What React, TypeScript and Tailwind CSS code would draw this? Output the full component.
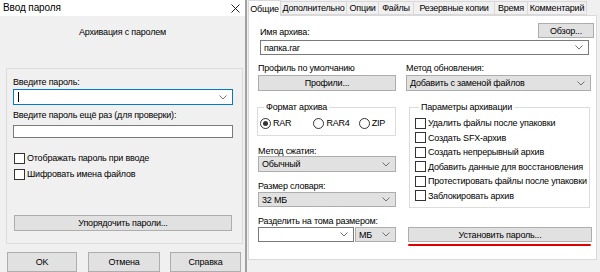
import React from 'react'

function Chevron() {
  return (
    <svg width="8" height="5" viewBox="0 0 8 5" className="flex-shrink-0">
      <polyline points="0.5,0.5 4,4 7.5,0.5" fill="none" stroke="#707070" strokeWidth="1" />
    </svg>
  )
}

function Btn({ children, className = '' }: { children?: React.ReactNode; className?: string }) {
  return (
    <div className={`flex items-center justify-center bg-[#e1e1e1] border border-[#adadad] ${className}`}>
      {children}
    </div>
  )
}

// выпадающий список только для чтения (серый)
function Select({ value, className = '' }: { value: string; className?: string }) {
  return (
    <div className={`flex items-center justify-between bg-[#e1e1e1] border border-[#adadad] pl-[3px] pr-[5px] ${className}`}>
      <span>{value}</span>
      <Chevron />
    </div>
  )
}

// редактируемый комбобокс (белый)
function Combo({ value = '', className = '', focused = false }: { value?: string; className?: string; focused?: boolean }) {
  return (
    <div
      className={`flex items-center justify-between bg-white border pl-[3px] pr-[5px] ${
        focused ? 'border-[#0078d7]' : 'border-[#7a7a7a]'
      } ${className}`}
    >
      <span className="flex items-center">
        {focused && <span className="block w-px h-[10px] bg-black ml-px" />}
        {value}
      </span>
      <Chevron />
    </div>
  )
}

function Check({ label }: { label: string }) {
  return (
    <div className="flex items-center h-[12px] gap-[2px]">
      <span className="block w-[11px] h-[11px] bg-white border border-[#333333] flex-shrink-0" />
      <span>{label}</span>
    </div>
  )
}

function Radio({ label, checked = false, className = '' }: { label: string; checked?: boolean; className?: string }) {
  return (
    <div className={`flex items-center gap-[2px] ${className}`}>
      <span className="flex items-center justify-center w-[11px] h-[11px] rounded-full border border-[#333333] bg-white">
        {checked && <span className="block w-[5px] h-[5px] rounded-full bg-[#333333]" />}
      </span>
      <span>{label}</span>
    </div>
  )
}

const tabs = [
  { label: 'Общие', w: 'w-[33px]', active: true },
  { label: 'Дополнительно', w: 'w-[66px]' },
  { label: 'Опции', w: 'w-[32px]' },
  { label: 'Файлы', w: 'w-[35px]' },
  { label: 'Резервные копии', w: 'w-[81px]' },
  { label: 'Время', w: 'w-[33px]' },
  { label: 'Комментарий', w: 'w-[59px]' },
]

const options = [
  'Удалить файлы после упаковки',
  'Создать SFX-архив',
  'Создать непрерывный архив',
  'Добавить данные для восстановления',
  'Протестировать файлы после упаковки',
  'Заблокировать архив',
]

export default function App() {
  return (
    <div className="flex w-[600px] h-[272px] overflow-hidden whitespace-nowrap font-['Liberation_Sans',Arial,sans-serif] text-[9px] tracking-[-0.2px] leading-[12px] text-black select-none">

      {/* ── ДИАЛОГ «ВВОД ПАРОЛЯ» ── */}
      <div className="w-[247px] flex-shrink-0 bg-[#f0f0f0] border-r-2 border-[#a0a0a0] flex flex-col">
        <div className="h-[16px] bg-white flex items-center justify-between pl-[3px] pr-[5px]">
          <span className="text-[10px] tracking-[-0.1px]">Ввод пароля</span>
          <svg width="9" height="9" viewBox="0 0 9 9">
            <path d="M0.5 0.5 L8.5 8.5 M8.5 0.5 L0.5 8.5" stroke="#222" strokeWidth="1" />
          </svg>
        </div>

        <div className="mt-[10px] text-center">Архивация с паролем</div>

        <div className="ml-[6px] mt-[30px] w-[237px] h-[176px] border border-[#dcdcdc] pl-[6px] pt-[7px] flex flex-col">
          <div>Введите пароль:</div>
          <Combo focused className="mt-px w-[220px] h-[16px]" />
          <div className="mt-[4px]">Введите пароль ещё раз (для проверки):</div>
          <div className="mt-[4px] w-[220px] h-[13px] bg-white border border-[#7a7a7a]" />
          <div className="mt-[14px] ml-px">
            <Check label="Отображать пароль при вводе" />
          </div>
          <div className="mt-[4px] ml-px">
            <Check label="Шифровать имена файлов" />
          </div>
          <Btn className="mt-[35px] ml-px w-[218px] h-[16px]">Упорядочить пароли...</Btn>
        </div>

        <div className="flex mt-[8px]">
          <Btn className="ml-[7px] w-[70px] h-[20px] border-[#0078d7]">OK</Btn>
          <Btn className="ml-[11px] w-[72px] h-[20px]">Отмена</Btn>
          <Btn className="ml-[10px] w-[71px] h-[20px]">Справка</Btn>
        </div>
      </div>

      {/* ── ОКНО ПАРАМЕТРОВ АРХИВА ── */}
      <div className="flex-1 bg-[#f0f0f0] pl-px pr-[3px] flex flex-col">
        <div className="flex h-[16px] items-end relative z-10">
          {tabs.map((t) =>
            t.active ? (
              <div key={t.label} className={`${t.w} h-[16px] bg-white border border-b-0 border-[#d9d9d9] flex items-center justify-center`}>
                {t.label}
              </div>
            ) : (
              <div key={t.label} className={`${t.w} h-[14px] mb-px bg-[#f0f0f0] border border-l-0 border-[#d9d9d9] flex items-center justify-center`}>
                {t.label}
              </div>
            )
          )}
        </div>

        <div className="-mt-px h-[245px] bg-white border border-[#d9d9d9] flex flex-col">
          <div className="flex items-end mt-[7px]">
            <span className="ml-[11px]">Имя архива:</span>
            <Btn className="ml-auto mr-[2px] w-[56px] h-[15px]">Обзор...</Btn>
          </div>
          <Combo value="папка.rar" className="mt-[2px] ml-[11px] w-[329px] h-[15px]" />

          <div className="flex mt-[7px]">
            {/* левая колонка */}
            <div className="ml-[9px] w-[138px] flex flex-col">
              <div>Профиль по умолчанию</div>
              <Btn className="mt-px h-[16px]">Профили...</Btn>

              <fieldset className="mt-[10px] -ml-px w-[139px] h-[35px] border border-[#dcdcdc] pl-[2px]">
                <legend className="ml-[4px] px-[2px]">Формат архива</legend>
                <div className="flex mt-[4px] h-[12px]">
                  <Radio label="RAR" checked />
                  <Radio label="RAR4" className="ml-[22px]" />
                  <Radio label="ZIP" className="ml-[9px]" />
                </div>
              </fieldset>

              <div className="mt-[10px] leading-[10px]">Метод сжатия:</div>
              <Select value="Обычный" className="h-[16px]" />
              <div className="mt-[9px] leading-[10px]">Размер словаря:</div>
              <Select value="32 МБ" className="mt-px h-[15px]" />
              <div className="mt-[9px] leading-[10px]">Разделить на тома размером:</div>
              <div className="flex mt-px">
                <Combo className="w-[96px] h-[15px]" />
                <Select value="МБ" className="ml-px w-[41px] h-[15px]" />
              </div>
            </div>

            {/* правая колонка */}
            <div className="ml-[10px] w-[185px] flex flex-col">
              <div>Метод обновления:</div>
              <Select value="Добавить с заменой файлов" className="mt-px h-[16px]" />

              <fieldset className="mt-[10px] ml-[3px] w-[181px] h-[107px] border border-[#dcdcdc] pl-[5px]">
                <legend className="ml-[4px] px-[2px]">Параметры архивации</legend>
                <div className="flex flex-col mt-[4px] gap-[2.6px]">
                  {options.map((o) => (
                    <Check key={o} label={o} />
                  ))}
                </div>
              </fieldset>

              <Btn className="mt-[19px] ml-[2px] w-[184px] h-[15px]">Установить пароль...</Btn>
              <div className="mt-[2px] ml-[2px] w-[183px] h-[2px] bg-[#e00000] rounded-full" />
            </div>
          </div>
        </div>
      </div>
    </div>
  )
}
